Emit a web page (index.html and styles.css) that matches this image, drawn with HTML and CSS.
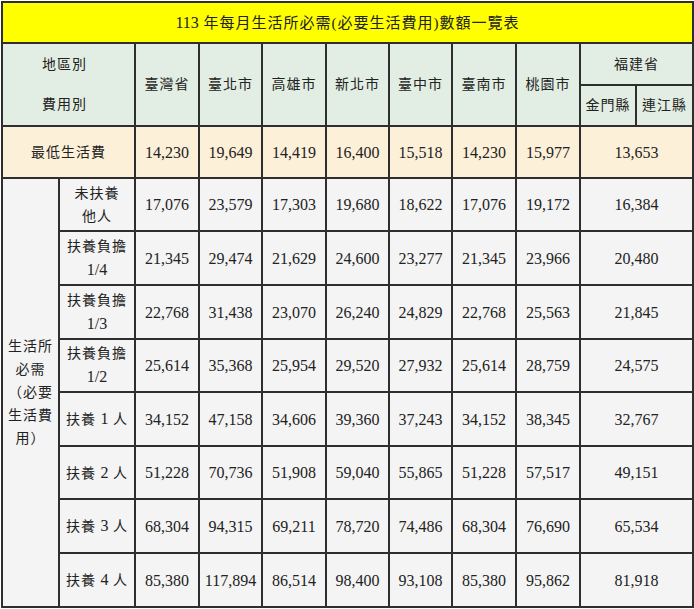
FILE: index.html
```html
<!DOCTYPE html>
<html lang="zh-Hant">
<head>
<meta charset="utf-8">
<title>113年每月生活所必需(必要生活費用)數額一覽表</title>
<link rel="stylesheet" href="styles.css">
</head>
<body>
<table class="sheet">
  <colgroup>
    <col class="c-grp"><col class="c-lab">
    <col class="c64"><col class="c63"><col class="c64"><col class="c63"><col class="c63"><col class="c64"><col class="c64">
    <col class="c56"><col class="c57">
  </colgroup>
  <tr class="r-title">
    <td class="title" colspan="11"><span class="digits">113</span> 年每月生活所必需(必要生活費用)數額一覽表</td>
  </tr>
  <tr class="r-head1 head">
    <td colspan="2" rowspan="2" class="corner"><div class="corner-line">地區別</div><div class="corner-line">費用別</div></td>
    <td rowspan="2">臺灣省</td>
    <td rowspan="2">臺北市</td>
    <td rowspan="2">高雄市</td>
    <td rowspan="2">新北市</td>
    <td rowspan="2">臺中市</td>
    <td rowspan="2">臺南市</td>
    <td rowspan="2">桃園市</td>
    <td colspan="2">福建省</td>
  </tr>
  <tr class="r-head2 head">
    <td>金門縣</td>
    <td>連江縣</td>
  </tr>
  <tr class="r-min min">
    <td colspan="2">最低生活費</td>
    <td class="num">14,230</td><td class="num">19,649</td><td class="num">14,419</td><td class="num">16,400</td><td class="num">15,518</td><td class="num">14,230</td><td class="num">15,977</td>
    <td class="num" colspan="2">13,653</td>
  </tr>
  <tr class="r-d data">
    <td rowspan="8" class="grp">生活所必需（必要生活費用）</td>
    <td class="lab">未扶養<br>他人</td>
    <td class="num">17,076</td><td class="num">23,579</td><td class="num">17,303</td><td class="num">19,680</td><td class="num">18,622</td><td class="num">17,076</td><td class="num">19,172</td>
    <td class="num" colspan="2">16,384</td>
  </tr>
  <tr class="r-e data">
    <td class="lab">扶養負擔<br><span class="digits">1/4</span></td>
    <td class="num">21,345</td><td class="num">29,474</td><td class="num">21,629</td><td class="num">24,600</td><td class="num">23,277</td><td class="num">21,345</td><td class="num">23,966</td>
    <td class="num" colspan="2">20,480</td>
  </tr>
  <tr class="r-e data">
    <td class="lab">扶養負擔<br><span class="digits">1/3</span></td>
    <td class="num">22,768</td><td class="num">31,438</td><td class="num">23,070</td><td class="num">26,240</td><td class="num">24,829</td><td class="num">22,768</td><td class="num">25,563</td>
    <td class="num" colspan="2">21,845</td>
  </tr>
  <tr class="r-d data">
    <td class="lab">扶養負擔<br><span class="digits">1/2</span></td>
    <td class="num">25,614</td><td class="num">35,368</td><td class="num">25,954</td><td class="num">29,520</td><td class="num">27,932</td><td class="num">25,614</td><td class="num">28,759</td>
    <td class="num" colspan="2">24,575</td>
  </tr>
  <tr class="r-e data">
    <td class="lab">扶養 <span class="digits">1</span> 人</td>
    <td class="num">34,152</td><td class="num">47,158</td><td class="num">34,606</td><td class="num">39,360</td><td class="num">37,243</td><td class="num">34,152</td><td class="num">38,345</td>
    <td class="num" colspan="2">32,767</td>
  </tr>
  <tr class="r-d data">
    <td class="lab">扶養 <span class="digits">2</span> 人</td>
    <td class="num">51,228</td><td class="num">70,736</td><td class="num">51,908</td><td class="num">59,040</td><td class="num">55,865</td><td class="num">51,228</td><td class="num">57,517</td>
    <td class="num" colspan="2">49,151</td>
  </tr>
  <tr class="r-e data">
    <td class="lab">扶養 <span class="digits">3</span> 人</td>
    <td class="num">68,304</td><td class="num">94,315</td><td class="num">69,211</td><td class="num">78,720</td><td class="num">74,486</td><td class="num">68,304</td><td class="num">76,690</td>
    <td class="num" colspan="2">65,534</td>
  </tr>
  <tr class="r-e data">
    <td class="lab">扶養 <span class="digits">4</span> 人</td>
    <td class="num">85,380</td><td class="num">117,894</td><td class="num">86,514</td><td class="num">98,400</td><td class="num">93,108</td><td class="num">85,380</td><td class="num">95,862</td>
    <td class="num" colspan="2">81,918</td>
  </tr>
</table>
</body>
</html>
```
FILE: styles.css
```css
html, body {
  margin: 0;
  padding: 0;
  background: #ffffff;
}
body {
  padding: 1px 0 0 1px;
}
.sheet {
  border-collapse: collapse;
  table-layout: fixed;
  width: 692px;
  font-family: "Liberation Serif", "Noto Sans CJK TC", serif;
  font-size: 14px;
  letter-spacing: 1px;
  color: #222222;
  border: 2px solid #2a2a2a;
}
.sheet td {
  border: 2px solid #2e2e2e;
  padding: 0;
  text-align: center;
  vertical-align: middle;
  line-height: 23px;
}
.c-grp { width: 57px; }
.c-lab { width: 76px; }
.c64 { width: 64px; }
.c63 { width: 63px; }
.c56 { width: 56px; }
.c57 { width: 57px; }

.r-title { height: 41px; }
.sheet .title {
  background: #ffff00;
  font-size: 15px;
  letter-spacing: 1px;
}
.head td { background: #e2eee3; }
.r-head1 { height: 42px; }
.r-head2 { height: 41px; }
.corner-line {
  line-height: 40px;
  padding-right: 8px;
}
.min td { background: #fdf0d9; }
.r-min { height: 52px; }
.data td { background: #f4f4f4; }
.r-d { height: 53px; }
.r-e { height: 54px; }
.sheet .num {
  font-size: 16px;
  letter-spacing: 0;
}
.digits {
  font-size: 16px;
  letter-spacing: 0;
}
.grp {
  padding: 0 3px;
}
.lab { padding: 0 1px; }
```
